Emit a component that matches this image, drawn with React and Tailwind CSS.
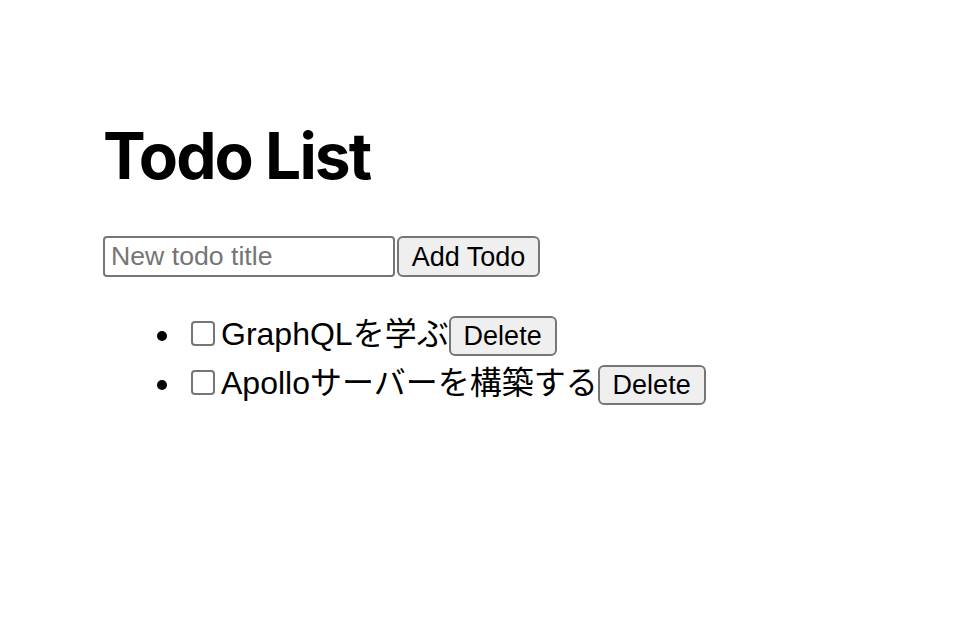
import { useState } from "react";

const initialTodos = [
  { id: 1, title: "GraphQLを学ぶ", done: false },
  { id: 2, title: "Apolloサーバーを構築する", done: false },
];

export default function App() {
  const [todos, setTodos] = useState(initialTodos);
  const [title, setTitle] = useState("");

  const add = () => {
    if (!title.trim()) return;
    setTodos([...todos, { id: Date.now(), title: title.trim(), done: false }]);
    setTitle("");
  };

  const toggle = (id) =>
    setTodos(todos.map((t) => (t.id === id ? { ...t, done: !t.done } : t)));

  const remove = (id) => setTodos(todos.filter((t) => t.id !== id));

  return (
    <div
      className="min-h-screen bg-white text-black pl-[103px] pt-[117px]"
      style={{ fontFamily: '"Liberation Sans", Arial, "Noto Sans CJK JP", sans-serif' }}
    >
      {/* Title */}
      <h1 className="text-[64px] font-bold leading-[77px] tracking-[-0.03em] mb-[42px] font-['Inter',sans-serif]">
        Todo List
      </h1>

      {/* New todo form */}
      <div className="flex">
        <input
          type="text"
          value={title}
          onChange={(e) => setTitle(e.target.value)}
          onKeyDown={(e) => e.key === "Enter" && add()}
          placeholder="New todo title"
          className="w-[292px] h-[41px] px-[6px] border-2 border-[#767676] rounded-[4px] text-[26.67px] placeholder-[#757575] outline-none"
        />
        <button
          onClick={add}
          className="ml-[2px] w-[143px] h-[41px] bg-[#efefef] border-2 border-[#767676] rounded-[6px] text-[27px] leading-[30px]"
        >
          Add Todo
        </button>
      </div>

      {/* Todos */}
      <ul className="list-disc pl-[80px] mt-[33px] text-[32px] leading-[49px]">
        {todos.map((todo) => (
          <li key={todo.id}>
            <span
              onClick={() => toggle(todo.id)}
              className="inline-block align-baseline w-[24px] h-[25px] ml-[8px] mr-[6px] mb-[-1px] border-2 border-[#767676] rounded-[4px] bg-white"
            />
            {todo.title}
            <button
              onClick={() => remove(todo.id)}
              className="inline-block align-baseline w-[108px] h-[40px] leading-[30px] bg-[#efefef] border-2 border-[#767676] rounded-[6px] text-[27px]"
            >
              Delete
            </button>
          </li>
        ))}
      </ul>
    </div>
  );
}
